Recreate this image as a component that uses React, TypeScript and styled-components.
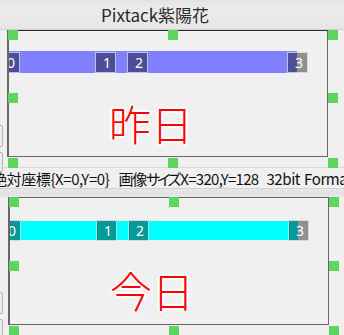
import React from 'react';
import styled, { createGlobalStyle } from 'styled-components';

const Global = createGlobalStyle`
  html, body { margin: 0; padding: 0; background: #f0f0f0; }
  body {
    width: 344px; height: 335px; overflow: hidden;
    font-family: "Noto Sans CJK JP", "Noto Sans", sans-serif;
  }
`;

const Window = styled.div`
  width: 344px;
  height: 335px;
  display: flex;
  flex-direction: column;
  overflow: hidden;
  background: #f0f0f0;
`;

const TitleBar = styled.div`
  flex: none;
  height: 30px;
  box-sizing: border-box;
  border-bottom: 1px solid #cfcfcf;
  background: linear-gradient(#e2e2e2, #ebebeb 25%, #e7e7e7);
  padding-left: 101px;
  font-size: 17px;
  line-height: 29px;
  color: #2a2a2a;
  white-space: nowrap;
`;

const Panel = styled.div<{ $h: number }>`
  flex: none;
  height: ${p => p.$h}px;
  display: flex;
  align-items: flex-start;
`;

const Gutter = styled.div<{ $w: number }>`
  flex: none;
  width: ${p => p.$w}px;
  display: flex;
  flex-direction: column;
  gap: 5px;
  padding-top: 95px;
  overflow: hidden;
`;

const Stub = styled.div<{ $h: number }>`
  width: 12px;
  height: ${p => p.$h}px;
  margin-left: -9px;
  box-sizing: border-box;
  border: 1px solid #b4b4b4;
  border-radius: 2px;
  background: #ececec;
`;

const Frame = styled.div<{ $h: number; $top: string }>`
  position: relative;
  flex: none;
  width: 321px;
  height: ${p => p.$h}px;
  box-sizing: border-box;
  border-left: 2px solid #666;
  border-right: 1px solid #666;
  border-bottom: 1px solid #666;
  border-top: 1px solid ${p => p.$top};
`;

const Canvas = styled.div`
  position: relative;
  width: 100%;
  height: 100%;
  overflow: hidden;
  padding-top: 20px;
  box-sizing: border-box;
`;

const Bar = styled.div<{ $color: string; $h: number; $mt: number }>`
  position: relative;
  width: 288px;
  height: ${p => p.$h}px;
  margin-top: ${p => p.$mt}px;
  background: ${p => p.$color};
`;

const Tag = styled.div<{ $x: number; $top: number; $h: number }>`
  position: absolute;
  left: ${p => p.$x}px;
  top: ${p => p.$top}px;
  width: 21px;
  height: ${p => p.$h}px;
  box-sizing: border-box;
  border: 1px solid rgba(255, 255, 255, 0.65);
  background: rgba(0, 0, 0, 0.4);
  color: #fff;
  font-family: "Noto Sans", sans-serif;
  font-size: 14px;
  line-height: ${p => p.$h - 2}px;
  text-align: right;
  padding-right: 4px;
`;

const Caption = styled.div`
  position: absolute;
  left: 100px;
  top: 71px;
  font-size: 42px;
  font-weight: 300;
  line-height: 42px;
  color: #ff0000;
  white-space: nowrap;
  text-shadow:
    1px 0 0 #fff, -1px 0 0 #fff, 0 1px 0 #fff, 0 -1px 0 #fff,
    1px 1px 0 #fff, -1px -1px 0 #fff, 1px -1px 0 #fff, -1px 1px 0 #fff,
    2px 0 1px #fff, -2px 0 1px #fff, 0 2px 1px #fff, 0 -2px 1px #fff;
`;

const Handle = styled.div<{ $x: number; $y: number }>`
  position: absolute;
  left: ${p => p.$x}px;
  top: ${p => p.$y}px;
  width: 10px;
  height: 10px;
  background: #5bd75b;
`;

const StatusBar = styled.div`
  flex: none;
  height: 21px;
  box-sizing: border-box;
  border-top: 1px solid #dadada;
  overflow: hidden;
  display: flex;
  align-items: center;
  margin-left: -8px;
  width: 430px;
  font-size: 15px;
  line-height: 19px;
  letter-spacing: -0.4px;
  font-feature-settings: "palt";
  color: #111;
  white-space: nowrap;
`;

const Field = styled.span<{ $gap: number }>`
  flex: none;
  margin-right: ${p => p.$gap}px;
`;

const Squeeze = styled.span<{ $ls: number }>`
  letter-spacing: ${p => p.$ls}px;
`;

const Band = styled.div`
  flex: none;
  height: 9px;
  box-sizing: border-box;
  border-top: 1px solid #d2d2d2;
  background: linear-gradient(#e6e6e6, #e2e2e2 50%, #e8e8e8);
`;

type Strip = {
  gutter: number;
  frameH: number;
  top: string;
  color: string;
  barH: number;
  barTop: number;
  tagTop: number;
  tagH: number;
  text: string;
};

const tags = [
  { n: '0', x: -10 },
  { n: '1', x: 86 },
  { n: '2', x: 118 },
  { n: '3', x: 278 },
];

function ImagePanel({ s }: { s: Strip }) {
  const midY = Math.floor(s.frameH / 2) - 1;
  const hs = [
    [1, -1], [161, -1], [321, -1],
    [1, midY], [321, midY],
    [1, s.frameH], [161, s.frameH], [321, s.frameH],
  ];
  return (
    <Panel $h={s.frameH + 10}>
      <Gutter $w={s.gutter}>
        <Stub $h={22} />
        <Stub $h={20} />
      </Gutter>
      <Frame $h={s.frameH} $top={s.top}>
        <Canvas>
          <Bar $color={s.color} $h={s.barH} $mt={s.barTop}>
            {tags.map(t => (
              <Tag key={t.n} $x={t.x} $top={s.tagTop} $h={s.tagH}>{t.n}</Tag>
            ))}
          </Bar>
          <Caption>{s.text}</Caption>
        </Canvas>
        {hs.map(([x, y], i) => (
          <Handle key={i} $x={x - 2} $y={y} />
        ))}
      </Frame>
    </Panel>
  );
}

export default function App() {
  const a: Strip = {
    gutter: 7, frameH: 127, top: '#2e2e2e', color: '#8080ff',
    barH: 22, barTop: 0, tagTop: 1, tagH: 21, text: '昨日',
  };
  const b: Strip = {
    gutter: 8, frameH: 128, top: '#666', color: '#00ffff',
    barH: 19, barTop: 3, tagTop: -1, tagH: 21, text: '今日',
  };
  return (
    <Window>
      <Global />
      <TitleBar>Pixtack紫陽花</TitleBar>
      <ImagePanel s={a} />
      <StatusBar>
        <Field $gap={9}>絶対座標{'{X=0,Y=0}'}</Field>
        <Field $gap={8}>
          <Squeeze $ls={-1.2}>画像</Squeeze>
          <Squeeze $ls={-3}>サイ</Squeeze>
          <Squeeze $ls={-1}>ズ</Squeeze>
          <Squeeze $ls={-0.7}>X=320,Y=128</Squeeze>
        </Field>
        <Field $gap={4}>32bit</Field>
        <Field $gap={0}>Format32bppArgb</Field>
      </StatusBar>
      <Band />
      <ImagePanel s={b} />
    </Window>
  );
}
